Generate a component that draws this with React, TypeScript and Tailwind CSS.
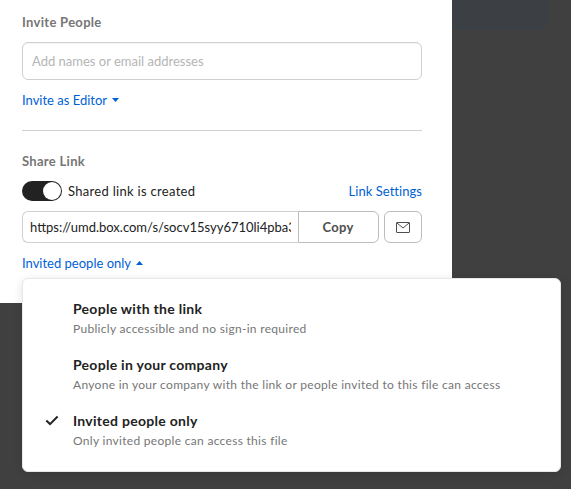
const options = [
  { title: 'People with the link', description: 'Publicly accessible and no sign-in required', selected: false },
  { title: 'People in your company', description: 'Anyone in your company with the link or people invited to this file can access', selected: false },
  { title: 'Invited people only', description: 'Only invited people can access this file', selected: true },
];

function Caret({ up = false }: { up?: boolean }) {
  return (
    <svg width="7" height="4" viewBox="0 0 7 4" fill="currentColor" aria-hidden="true">
      <path d={up ? 'M0 4 3.5 0 7 4Z' : 'M0 0h7L3.5 4Z'} />
    </svg>
  );
}

function AccessMenu() {
  return (
    <ul className="absolute top-[278px] left-[22px] h-[194px] w-[539px] rounded-md border border-[#e8e8e8] bg-white pt-[19px] shadow-[0_2px_10px_rgba(0,0,0,0.12)]">
      {options.map((option) => (
        <li key={option.title} className="flex h-14">
          <div className="w-[50px] shrink-0 pt-[5px] pl-[22px]">
            {option.selected && (
              <svg width="14" height="11" viewBox="0 0 14 11" fill="none" aria-hidden="true">
                <path d="m1.3 5.6 3.7 3.5L12.6 1.5" stroke="#222" strokeWidth="2" />
              </svg>
            )}
          </div>
          <div>
            <div className="text-sm leading-[22px] font-bold tracking-[0.28px] whitespace-nowrap text-[#222]">{option.title}</div>
            <div className="text-xs leading-[18px] tracking-[0.3px] whitespace-nowrap text-[#767676]">{option.description}</div>
          </div>
        </li>
      ))}
    </ul>
  );
}

export default function App() {
  return (
    <main className="relative h-[489px] w-[571px] overflow-hidden bg-[#404040] font-['Lato',sans-serif] text-[13px] leading-5 tracking-normal text-[#222]">
      <div className="absolute top-0 left-[440px] h-[29px] w-[108px] rounded-br-lg border-r border-b border-[#38424a] bg-[#3c4044]" />
      <section className="relative h-[303px] w-[452px] bg-white px-[22px] pt-3 pr-[30px]">
        <h2 className="font-bold tracking-[0.3px] text-[#767676]">Invite People</h2>
        <input
          aria-label="Invite people"
          placeholder="Add names or email addresses"
          className="mt-2.5 block h-[38px] w-full rounded-md border border-[#d0d0d0] px-[9px] shadow-[inset_0_1px_1px_rgba(0,0,0,0.05)] placeholder:text-[#b5b5b5]"
        />
        <button className="mt-2.5 flex h-5 items-center gap-[5px] text-[#0061d5]">
          <span>Invite as Editor</span>
          <Caret />
        </button>
        <hr className="mt-5 border-[#d0d0d0]" />
        <h2 className="mt-5 font-bold tracking-[0.3px] text-[#767676]">Share Link</h2>
        <div className="mt-2.5 flex h-5 items-center">
          <div role="switch" aria-checked="true" className="flex h-5 w-10 justify-end rounded-full bg-[#222] p-px">
            <div className="size-[18px] rounded-full bg-white" />
          </div>
          <span className="ml-1.5 tracking-[0.3px]">Shared link is created</span>
          <a className="ml-auto tracking-[0.04px] text-[#0061d5]">Link Settings</a>
        </div>
        <div className="mt-2.5 flex h-8">
          <div className="flex w-[276px] items-center rounded-l-md border border-r-0 border-[#d0d0d0] px-[7px]">
            <span className="overflow-hidden whitespace-nowrap">https://umd.box.com/s/socv15syy6710li4pba3</span>
          </div>
          <button className="w-[81px] rounded-r-md border border-[#bcbcbc] pr-px font-bold tracking-[0.3px] text-[#4e4e4e]">Copy</button>
          <button aria-label="Send link by email" className="ml-[5px] grid w-[38px] place-items-center rounded-md border border-[#bcbcbc]">
            <svg width="14" height="11" viewBox="0 0 14 11" fill="none" stroke="#4e4e4e" aria-hidden="true">
              <rect x=".5" y=".5" width="13" height="10" rx=".5" />
              <path d="m1 1 6 5 6-5" />
            </svg>
          </button>
        </div>
        <button className="mt-2.5 flex h-5 items-center gap-[5px] text-[#0061d5]">
          <span>Invited people only</span>
          <Caret up />
        </button>
      </section>
      <AccessMenu />
    </main>
  );
}
